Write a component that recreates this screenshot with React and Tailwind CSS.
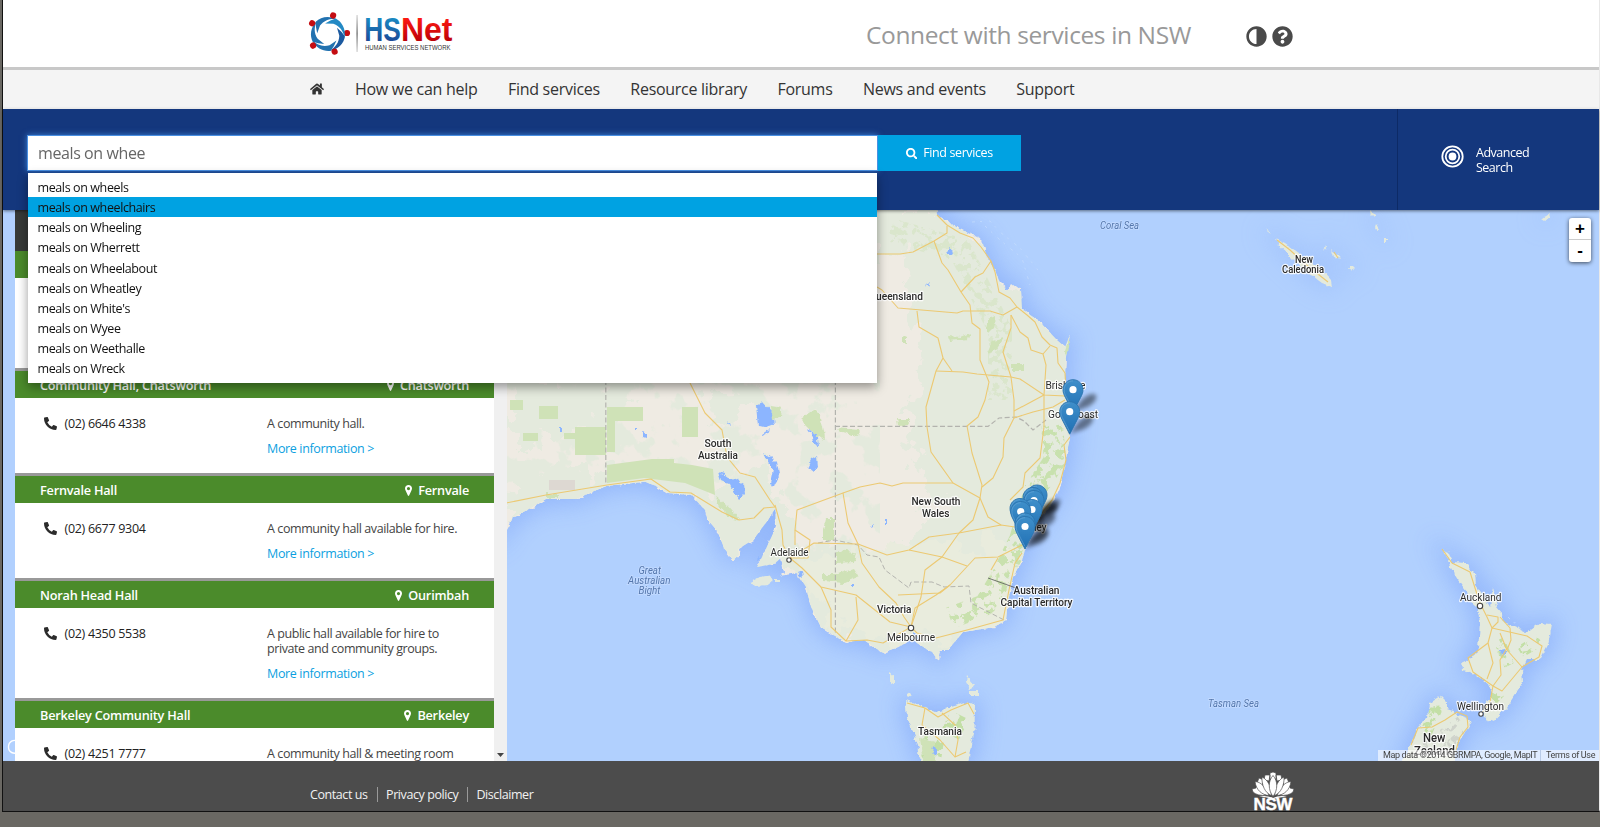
import React from "react";
import { FaHome, FaSearch, FaAdjust, FaQuestionCircle, FaPhoneAlt } from "react-icons/fa";

const NAV = ["How we can help", "Find services", "Resource library", "Forums", "News and events", "Support"];
const SUGGESTIONS = ["wheels", "wheelchairs", "Wheeling", "Wherrett", "Wheelabout", "Wheatley", "White's", "Wyee", "Weethalle", "Wreck"];
const HALLS = [
  { name: "Community Hall, Chatsworth", place: "Chatsworth", phone: "(02) 6646 4338", text: "A community hall.", height: "h-[75px]" },
  { name: "Fernvale Hall", place: "Fernvale", phone: "(02) 6677 9304", text: "A community hall available for hire.", height: "h-[75px]" },
  { name: "Norah Head Hall", place: "Ourimbah", phone: "(02) 4350 5538", text: "A public hall available for hire to private and community groups.", height: "h-[90px]" },
  { name: "Berkeley Community Hall", place: "Berkeley", phone: "(02) 4251 7777", text: "A community hall & meeting room", height: "h-[90px]" },
];

function Logo() {
  return (
    <svg className="h-[46px] w-[150px] overflow-visible" viewBox="306 10 150 46">
      <defs>
        <linearGradient id="blueFade" x1="0" y1="0" x2="0" y2="1">
          <stop offset="0.15" stopColor="#1a8cc4" />
          <stop offset="0.85" stopColor="#1b4796" />
        </linearGradient>
        <linearGradient id="redFade" x1="0" y1="0" x2="0" y2="1">
          <stop offset="0.15" stopColor="#ff1a12" />
          <stop offset="0.85" stopColor="#b80008" />
        </linearGradient>
        <linearGradient id="lineFade" x1="0" y1="0" x2="0" y2="1">
          <stop offset="0" stopColor="#ddd" />
          <stop offset="0.5" stopColor="#888" />
          <stop offset="1" stopColor="#ddd" />
        </linearGradient>
      </defs>
      {[0, 72, 144, 216, 288].map((a) => (
        <g key={a} transform={`translate(328 33.8) rotate(${a})`}>
          <path d="M17 2.6 C15.8 9.500 10.500 15.500 1.500 17 C7.500 13.500 11 9 11.3 2 L9 -6 Q14 -2 17 2.6Z" fill={a > 70 && a < 220 ? "#2272b0" : a > 220 ? "#2389c4" : "#1c5aa0"} />
          <circle cx="19" cy="-0.8" r="3.1" fill="#c40d12" />
        </g>
      ))}
      <rect x="356.3" y="15" width="1.6" height="37" fill="url(#lineFade)" />
      <g fontFamily="Liberation Sans, Arial, sans-serif">
        <text x="364.3" y="40.9" fontSize="32.5" fontWeight="700" fill="url(#blueFade)" textLength="36.5" lengthAdjust="spacingAndGlyphs">HS</text>
        <text x="401" y="40.9" fontSize="32.5" fontWeight="700" fill="url(#redFade)" textLength="51.5" lengthAdjust="spacingAndGlyphs">Net</text>
        <text x="365" y="50" fontSize="6.6" fill="#333" textLength="85.5" lengthAdjust="spacingAndGlyphs">HUMAN SERVICES NETWORK</text>
      </g>
    </svg>
  );
}

const MAINLAND =
  "M500 200 L500 540 L506 530 L513 517 L527 510 L546 499 L576 499 L592 492 L607 485.7 L645 481.7 L656 486 L668 493 L691 495 L705 510 L708 520 L714 527 L718 532 L720 537 L724 548 L733 560 L739 555 L738 549 L753 540 L768 520 L775.5 508 L776 527 L770 540 L764 553 L757 567 L774 564 L781 558 L784 572 L780 576 L797 573 L806 587 L811 607 L821 627 L837 637 L846 642 L864 640 L883 653 L895 648 L906 643 L911 637 L917 643 L925 648 L932 652 L938 660 L940 650 L948 650 L963 632 L994 627 L1006 620 L1007 607 L1009 597 L1013 577 L1022 560 L1026 547 L1036 523 L1051 505 L1061 482 L1065 463 L1070 437 L1068 400 L1065 380 L1066 357 L1070 335 L1065 347 L1057 340 L1040 322 L1022 309 L1021 290 L1012 283 L1008 290 L1000 283 L995 270 L987 258 L982 240 L960 229 L947 222 L937 215 L936 200 Z";
const TASMANIA = "M905.7 705 L906 700 L920 705 L936 712 L951 707 L969 702 L975 705 L974.5 730 L969 764 L921 764 L915 737 L907 717Z";
const ISLANDS =
  "M890 673 L894 676 L894 684 L890 685Z M967 676 L974 685 L971 690 L966 682Z M970 691 h8 v4 h-8Z M750.6 582 L760 577 L770 575.7 L772.5 580 L768 585 L754 586Z M907 694 l3 -2 1 4 -3 2Z M775 580 h5 v2 h-5Z";
const NORTH_ISLAND =
  "M1441.7 549 L1448 552 L1453 562 L1465 563 L1475 573 L1476 585 L1483 595 L1490 607 L1493 588 L1497 607 L1502 613 L1503 622 L1527 633 L1540 623 L1552 624 L1548 645 L1540 660 L1527 660 L1522 670 L1523 682 L1507 707 L1493 722 L1483 718 L1483 710 L1492 693 L1488 683 L1473 673 L1463 670 L1462 663 L1472 658 L1478 648 L1480 623 L1478 612 L1467 592 L1458 580 L1450 567 L1449 560Z";
const SOUTH_ISLAND = "M1408 752 L1418 727 L1428 717 L1430 703 L1441 696 L1447 702 L1447 710 L1467 717 L1470 725 L1458 743 L1453 764 L1400 764Z";
const CALEDONIA =
  "M1275 238 L1285 243 L1304 257 L1318 266 L1331 280 L1332 287 L1322 283 L1304 270 L1290 256 L1278 245Z M1332 250 l5 4 3 6 -6 -3Z M1349 264 l5 5 -2 3 -3 -4Z M1371 210 l5 5 -2 2 -4 -4Z M1376 224 l3 5 -2 2 -2 -4Z M1384 239 h3 v4 h-3Z M1542 219 l8 -6 1 3 -6 5Z M1323 251 l2 -6 1 2Z M1267 228 l2 4 -1 2Z";
const LAND = [MAINLAND, TASMANIA, ISLANDS, NORTH_ISLAND, SOUTH_ISLAND, CALEDONIA].join(" ");
const SHELF = [MAINLAND, TASMANIA, NORTH_ISLAND, SOUTH_ISLAND].join(" ");

const GREEN_COVER =
  "M870 205 L940 205 L1000 270 L1080 330 L1080 520 L1030 640 L930 665 L800 640 L795 575 L815 545 L850 548 L878 565 L905 560 L905 535 L940 512 L925 480 L905 440 L915 400 L925 345 L905 300 L912 245 L870 262Z M510 383 L600 383 L640 400 L600 430 L560 440 L510 440Z M690 495 L770 470 L790 530 L800 580 L735 580Z M700 385 L760 395 L720 430Z M507 465 L600 470 L700 480 L700 500 L507 530Z";

const ROADS = [
  "877,254 900,254 913,252 934,241 947,233 947,226",
  "934,241 942,263 948,270 961,292 970,305 972,323 980,329 980,360 989,382 985,400 978,417 967,426 972,453 982,485 980,498",
  "961,292 975,277 983,273 991,261",
  "937,215 947,225 960,233 973,238 981,247 991,261 995,272 999,292 1010,298 1017,307 1027,315 1035,322 1042,337 1050,345 1057,348 1058,363 1065,373 1066,393",
  "877,287 882,290 898,308 957,313 963,311 990,311 1003,315 1017,307",
  "917,311 919,327 938,338 943,358 936,371 926,407 927,427 931,452 953,483 980,498",
  "936,371 963,372 977,374 1011,377 1020,379 1044,395 1065,396",
  "943,358 952,371",
  "1011,315 1011,328 1003,352 1011,377 1014,400 1014,418 1004,438 1003,457 993,478 982,487",
  "1011,315 1020,332 1028,338 1031,350 1043,354 1046,365 1044,395 1044,427 1040,458 1025,473 1023,487 1010,500",
  "1043,354 1050,346",
  "1014,411 1044,395",
  "1014,418 1033,412 1053,407 1065,400",
  "1070,437 1064,445 1066,460 1060,483 1052,500 1040,515",
  "843,493 860,487 880,483 892,486 903,483 953,483",
  "690,383 705,413 722,430 727,457 740,473 755,477 770,500 775,507",
  "506,503 546,495 607,485 651,479 670,492 691,493 722,512 739,520 754,518 764,508 775,507",
  "775,505 782,530 783,545 790,558 802,568 821,587 856,595 890,622 911,627",
  "790,558 814,543 858,544 887,555 909,550 929,537 959,533 1001,525 1015,527",
  "795,545 795,530 797,510 843,493 848,523 858,544 862,563 879,587 896,603 904,617 911,627",
  "795,530 810,540 808,558 790,558",
  "980,498 973,520 959,533 942,557 925,570 921,597 911,627",
  "911,627 915,608 936,595 950,585 975,558 998,557 1022,545",
  "1022,553 1015,563 1009,590 1003,620 967,630 936,638 917,633 911,627",
  "980,498 988,517 1001,525",
  "821,587 831,610 831,627 846,641 867,640 883,643 911,627",
  "856,597 858,620 846,641",
  "909,550 942,557 967,566",
  "898,595 940,593 950,585",
  "991,570 998,558",
  "907,703 925,708 938,717 951,710 968,703 974,714",
  "925,708 922,725 940,740 955,757",
  "942,713 955,725 958,740 955,757 966,752",
  "1442,549 1452,563 1470,572 1475,588 1480,603 1487,617 1492,628 1527,636 1542,646 1539,657 1522,667 1502,691 1493,686 1473,672 1468,658 1488,643 1492,628",
  "1487,615 1498,617 1498,622 1492,628",
  "1500,633 1507,650 1522,667",
  "1488,643 1493,663 1487,679",
  "1507,648 1500,660 1501,675 1493,686 1490,702 1482,713",
  "1500,617 1510,628 1511,640 1507,650",
  "1467,716 1457,712 1445,720 1432,727 1418,728 1411,745",
  "1467,716 1468,727 1460,737 1456,750",
  "1277,240 1290,250 1304,263 1328,282",
  "1334,252 1338,258",
];

const BLOCK_PARKS =
  "M510 400h13v10h-13Z M539 406h19v13h-19Z M523 433h15v8h-15Z M575 427h31v28h-31Z M564 433h11v6h-11Z M607 407h36v14h-28v31h-8Z M682 407h16v30h-16Z M607 465 L652 459 L674 459 L674 463 L692 465 L713 469 L715 495 L685 483 L644 478 L607 483Z";
const PARKS =
  "M771 406 l11 2 -2 8 -8 4Z M814 409 L820 415 L824 430 L825 439 L815 435 L800 420Z M837 427 l22 2 -2 7 -15 -4Z M897 419 l14 0 -3 6 -10 1Z M826 518 h8 v22 h-11 v-10Z M836 550 l20 2 -2 10 -18 1Z M823 574 l16 0 15 -5 5 8 -14 6 -22 -2Z M715 495 l10 8 16 18 -8 -2 -14 -12Z M987 320 l8 -4 0 10 -8 8Z M1012 364 h12 v7 h-12Z M992 341 l12 -3 -8 12 -9 3Z M903 335 l4 2 0 8 -4 -2Z M948 336 l12 1 10 -4 -2 6 -18 2Z M920 738 l14 4 2 20 -12 0Z M1065 350 l4 -12 1 5 -3 14Z M546 494 h14 v4 h-14Z";
const LAKES =
  "M756 405 L763 402 L772 412 L774 425 L766 428 L758 427Z M762 435 L771 429 L769 433 L762 436Z M807 430 L812 432 L818 437 L819 448 L815 444 L813 437Z M816 456 L817 467 L813 472 L807 467 L811 459Z M763 453 L773 459 L777 463 L780 477 L774 486 L770 484 L773 470Z M718 472 l6 2 4 3 8 2 8 5 1 9 -6 6 -6 -8 -3 -6 -9 -4Z M735 490 l4 3 1 5 -4 -3Z M643 431 l3 2 0 5 -3 -1Z M946 252 l4 -4 4 3 -3 4Z M925 286 l5 -3 -2 4Z M727 421 l3 2 1 3Z M912 633 l6 2 0 5 -4 0Z M757 556 l4 3 -3 2Z M797 572 l5 -2 1 8 -3 -2Z M869 526 l4 -3 -1 6Z M1500 650 l5 -1 0 5 -4 2Z M508 400 l6 -5 M634 428h2v3h-2Z M559 428h3v3h-3Z M885 520h2v4h-2Z M852 585h3v2h-3Z M933 746l4 3-2 7-3-3Z";

const LABELS = [
  { t: "Queensland", x: 869, y: 300, w: 54, b: 1 },
  { t: "South", x: 704.5, y: 447, w: 27, b: 1 },
  { t: "Australia", x: 698, y: 459, w: 40, b: 1 },
  { t: "New", x: 1295, y: 263, w: 18, b: 1, s: 11 },
  { t: "Caledonia", x: 1282, y: 273, w: 42, b: 1, s: 11 },
  { t: "Brisbane", x: 1045.5, y: 389, w: 40 },
  { t: "Gold Coast", x: 1048, y: 417.5, w: 50 },
  { t: "New South", x: 911.4, y: 505, w: 49, b: 1 },
  { t: "Wales", x: 922, y: 517, w: 27.5, b: 1 },
  { t: "Adelaide", x: 770.5, y: 555.5, w: 38 },
  { t: "Victoria", x: 877, y: 613, w: 34.5, b: 1 },
  { t: "Melbourne", x: 887, y: 641, w: 48 },
  { t: "Sydney", x: 1015, y: 531, w: 31.5 },
  { t: "Australian", x: 1013.5, y: 594, w: 46, b: 1 },
  { t: "Capital Territory", x: 1000.5, y: 606, w: 72, b: 1 },
  { t: "Tasmania", x: 918, y: 734.5, w: 44, b: 1 },
  { t: "Auckland", x: 1460, y: 601, w: 41.5 },
  { t: "Wellington", x: 1457, y: 710, w: 47 },
  { t: "New", x: 1423, y: 741.5, w: 22.5, b: 1, s: 13 },
  { t: "Zealand", x: 1414, y: 754.5, w: 41, b: 1, s: 13 },
];
const SEA_LABELS = [
  { t: "Coral Sea", x: 1100, y: 229, w: 39 },
  { t: "Tasman Sea", x: 1208, y: 707, w: 51 },
  { t: "Great", x: 638.5, y: 574, w: 22.5 },
  { t: "Australian", x: 628, y: 584, w: 42.5 },
  { t: "Bight", x: 638.5, y: 594, w: 22 },
];
const TOWNS = [[789, 560], [911, 628, 2.7], [1480, 606, 2.7], [1481, 714]];
const PINS = [[1073, 389.7], [1069.7, 411.7], [1037, 495], [1033, 497.5], [1034, 500.5], [1032, 509.5], [1020, 508.5], [1020.7, 511.5], [1025, 523], [1025, 526.5]];

function Map() {
  return (
    <svg className="absolute inset-0 h-full w-full" viewBox="3 210 1596 551" preserveAspectRatio="none">
      <defs>
        <filter id="rough" x="0" y="200" width="1610" height="570" filterUnits="userSpaceOnUse">
          <feTurbulence type="fractalNoise" baseFrequency="0.16" numOctaves="3" seed="4" result="n" />
          <feDisplacementMap in="SourceGraphic" in2="n" scale="6" xChannelSelector="R" yChannelSelector="G" />
        </filter>
        <filter id="roughSoft" x="0" y="200" width="1610" height="570" filterUnits="userSpaceOnUse">
          <feTurbulence type="fractalNoise" baseFrequency="0.05" numOctaves="4" seed="9" result="n" />
          <feDisplacementMap in="SourceGraphic" in2="n" scale="50" xChannelSelector="R" yChannelSelector="G" />
        </filter>
        <filter id="speckle" x="0" y="200" width="1610" height="570" filterUnits="userSpaceOnUse">
          <feTurbulence type="fractalNoise" baseFrequency="0.14" numOctaves="4" seed="12" />
          <feColorMatrix values="0 0 0 0 0  0 0 0 0 0  0 0 0 0 0  14 0 0 0 -7.2" result="m" />
          <feComposite in="SourceGraphic" in2="m" operator="in" />
        </filter>
        <filter id="patches" x="0" y="200" width="1610" height="570" filterUnits="userSpaceOnUse">
          <feTurbulence type="fractalNoise" baseFrequency="0.035" numOctaves="5" seed="3" />
          <feColorMatrix values="0 0 0 0 0  0 0 0 0 0  0 0 0 0 0  16 0 0 0 -8.6" result="m" />
          <feComposite in="SourceGraphic" in2="m" operator="in" />
        </filter>
        <filter id="glow" x="0" y="160" width="1650" height="650" filterUnits="userSpaceOnUse">
          <feGaussianBlur stdDeviation="12" />
        </filter>
        <filter id="pinShade" x="-50%" y="-50%" width="200%" height="200%">
          <feGaussianBlur stdDeviation="2" />
        </filter>
        <clipPath id="land"><path d={LAND} /></clipPath>
        <linearGradient id="pinFill" x1="0" y1="0" x2="0" y2="1">
          <stop offset="0" stopColor="#3f8fca" />
          <stop offset="1" stopColor="#2070b4" />
        </linearGradient>
        <g id="pin">
          <path d="M0 -10C-5.6 -10 -10 -5.6 -10 0C-10 3 -9 5 -7.5 8L0 22.5L7.5 8C9 5 10 3 10 0C10 -5.6 5.6 -10 0 -10Z" fill="url(#pinFill)" stroke="#2b74ae" strokeWidth="0.9" />
          <path d="M0 -8.8C-5 -8.8 -8.8 -5 -8.8 0C-8.8 3 -8 5 -6.5 7.6L0 20" fill="none" stroke="#70acd9" strokeOpacity="0.6" strokeWidth="0.9" />
          <circle r="3.6" fill="#fff" />
        </g>
      </defs>
      <rect x="0" y="200" width="1610" height="570" fill="#b1d0fe" />
      <path d={SHELF} fill="#8fb3fb" stroke="#8fb3fb" strokeWidth="10" filter="url(#glow)" opacity="0.9" />
      <path d={CALEDONIA} fill="#8fb3fb" stroke="#8fb3fb" strokeWidth="6" filter="url(#glow)" opacity="0.6" />
      <g filter="url(#rough)">
        <path d={MAINLAND} fill="#efebe3" />
        <path d={[TASMANIA, ISLANDS, NORTH_ISLAND, SOUTH_ISLAND, CALEDONIA].join(" ")} fill="#e4eadd" />
      </g>
      <g clipPath="url(#land)">
        <path d={GREEN_COVER} fill="#e4eadd" filter="url(#roughSoft)" />
        <rect x="500" y="380" width="380" height="280" fill="#e4eadd" filter="url(#patches)" />
        <path d="M790 560 L1010 540 L1010 630 L940 645 L840 630Z" fill="#e9ecdd" filter="url(#roughSoft)" />
        <g fill="none" stroke="#c3dfa6" strokeLinejoin="round" filter="url(#speckle)">
          <path d="M1052 425 L1055 460 L1035 490 L1020 540 L1000 580 L985 605 L950 618" strokeWidth="22" opacity="0.85" />
          <path d="M935 735 L930 765 M960 715 L950 735" strokeWidth="20" />
          <path d="M1498 640 L1510 665 M1540 640 L1520 652 M1500 700 L1490 690 M1438 705 L1425 735" strokeWidth="12" />
          <path d="M890 230 L960 250 L1000 330 L1000 400" strokeWidth="24" opacity="0.3" />
        </g>
        <path d="M1420 750 L1460 720 M1430 760 L1464 732" stroke="#cfd3cb" strokeWidth="8" filter="url(#speckle)" />
      </g>
      <g filter="url(#rough)">
        <path d={PARKS} fill="#cfe2b7" />
        <path d={LAKES} fill="#8cb5ff" />
      </g>
      <path d={BLOCK_PARKS} fill="#cfe2b7" />
      <rect x="549" y="480" width="26" height="10" fill="#ddd8d2" />
      <g fill="none" stroke="#b3b3ae" strokeWidth="1.2" strokeDasharray="5 2.5">
        <path d="M605.8 380V484 M835.4 380V634 M835 426.4H988 L999 418 L1016 417 L1024 421 L1033 430 L1046 420" />
        <path d="M818 543 L835 540 L858 545 L867 555 L879 557 L885 570 L909 588 L911 582 L932 582 L944 587 L969 586 L971 603 L1006 621" strokeWidth="1" />
      </g>
      <g fill="none" stroke="#ecc972" strokeWidth="1.1" strokeLinejoin="round">
        {ROADS.map((r) => (
          <polyline key={r} points={r} />
        ))}
      </g>
      <g fill="none" stroke="#c3dafc" strokeWidth="0.8" strokeDasharray="3 5 2 7">
        <path d="M972 222 L990 221 L1000 232 L1020 248 L1038 270 M985 226 L1000 240 L1022 258 L1030 285 M1508 617 l6 6 3 -1" />
      </g>
      <path d="M988 578 L1016 588" stroke="#555" strokeWidth="0.8" />
      {TOWNS.map(([x, y, r]) => (
        <circle key={x} cx={x} cy={y} r={r || 2.2} fill="#fff" stroke="#444" strokeWidth="1.1" />
      ))}
      <g fontFamily="Roboto, sans-serif" fontSize="11.7" stroke="#fff" strokeOpacity="0.85" strokeWidth="2.4" strokeLinejoin="round" paintOrder="stroke" fill="#2a2a2a">
        {LABELS.map((l) => (
          <text key={l.t + l.y} x={l.x} y={l.y} textLength={l.w} lengthAdjust="spacingAndGlyphs" fontWeight={l.b ? 500 : 400} fontSize={l.s || 11.7}>{l.t}</text>
        ))}
      </g>
      <g fontFamily="Roboto, sans-serif" fontSize="10.5" fontStyle="italic" fill="#5477ad" stroke="#c6dcff" strokeWidth="1.5" paintOrder="stroke">
        {SEA_LABELS.map((l) => (
          <text key={l.t} x={l.x} y={l.y} textLength={l.w} lengthAdjust="spacingAndGlyphs">{l.t}</text>
        ))}
      </g>
      <path d="M20 742 C13 738 8.500 742 8.500 747 C8.500 752 13 755 20 752" fill="none" stroke="#fff" strokeWidth="1.4" />
      {PINS.map(([x, y]) => (
        <path key={`s${x},${y}`} transform={`translate(${x} ${y})`} d="M0 22 L9 10 Q17 2 23 5 Q25 11 15 17Z" fill="#000" opacity="0.45" filter="url(#pinShade)" />
      ))}
      {PINS.map(([x, y]) => (
        <use key={`p${x},${y}`} href="#pin" x={x} y={y} />
      ))}
    </svg>
  );
}

function PlaceMarker() {
  return (
    <svg className="mr-[6px] h-[11px] w-[7px]" viewBox="0 0 7 11">
      <path fillRule="evenodd" fill="#fff" d="M3.500 0C1.500 0 0 1.500 0 3.500C0 4.500 0.400 5.300 0.800 6L2.900 10.500Q3.500 11.300 4.100 10.500L6.200 6C6.600 5.300 7 4.500 7 3.500C7 1.500 5.500 0 3.500 0ZM3.500 2A1.600 1.600 0 1 1 3.500 5.200A1.600 1.600 0 1 1 3.500 2Z" />
    </svg>
  );
}

function Hall({ name, place, phone, text, height }) {
  return (
    <div className="shrink-0 border-t-[3px] border-[#999] bg-white">
      <div className="flex h-[27px] items-center justify-between bg-[#4b8b2b] pt-[2px] pr-[25px] pl-[25px] text-[12.7px] font-semibold tracking-[-0.22px] text-white">
        <span>{name}</span>
        <span className="flex items-center">
          <PlaceMarker />
          {place}
        </span>
      </div>
      <div className={`flex text-[12.5px] leading-[15px] ${height}`}>
        <div className="flex w-[252px] pt-[18px] pl-[29px] tracking-[-0.3px] text-[#222]">
          <FaPhoneAlt className="mt-[0.5px] mr-[7.5px] size-[13px] text-[#2b2b2b]" />
          {phone}
        </div>
        <div className="w-[210px] pt-[18px] tracking-[-0.42px] text-[#444]">
          <p>{text}</p>
          <p className="pt-[10px] tracking-[-0.36px] text-[#0c9fdf]">More information &gt;</p>
        </div>
      </div>
    </div>
  );
}

function Lotus() {
  return (
    <svg className="h-[39px] w-[42px] overflow-visible" viewBox="0 0 42 39">
      <g fill="#fff" stroke="#4c4c4c" strokeWidth="0.7">
        <path d="M7 6 L12 8 L10 13 L5 11Z M35 6 L30 8 L32 13 L37 11Z M13 3 L18 3 L17 9 L12 8Z M29 3 L24 3 L25 9 L30 8Z M18 1 L21 0 L24 1 L24 7 L18 7Z" />
        <path d="M0 17 L4 16 L4 14 L10 18 L14 23.500 C9 23.500 4 23 1 20Z M42 17 L38 16 L38 14 L32 18 L28 23.500 C33 23.500 38 23 41 20Z" />
        <path d="M3 9.500 C9 10 14 15 17 23.500 C10 23 4 18 3 9.500Z M39 9.500 C33 10 28 15 25 23.500 C32 23 38 18 39 9.500Z" />
        <path d="M10 5 C16 8 19 14 19.500 23.500 C13 21 9.500 13 10 5Z M32 5 C26 8 23 14 22.500 23.500 C29 21 32.500 13 32 5Z" />
        <path d="M21 3.500 C26 9 26 18 21 24.500 C16 18 16 9 21 3.500Z" />
        <path d="M7 24.500 Q15 23 21 26 Q27 23 35 24.500 Q28 25 21 27 Q14 25 7 24.500Z" strokeWidth="0" />
      </g>
      <text x="1.500" y="38" fontFamily="Liberation Sans, Arial, sans-serif" fontWeight="700" fontSize="16" fill="#fff" textLength="38.500" lengthAdjust="spacingAndGlyphs" stroke="#fff" strokeWidth="0.4">NSW</text>
    </svg>
  );
}

export default function App() {
  return (
    <div className="h-[827px] w-[1600px] overflow-hidden bg-[#6a6863] pl-[2px] font-['Open_Sans',sans-serif]">
      <div className="flex h-[812px] w-full flex-col border-r border-b-2 border-l border-r-[#e8e8e8] border-b-[#111] border-l-[#111] bg-white">
        <header className="flex h-[70px] shrink-0 border-b-[3px] border-[#c8c8c8] pl-[303px]">
          <div className="mt-[10px] w-[560px]"><Logo /></div>
          <div className="mt-[16px] w-[380px] text-[24.5px] leading-[38px] tracking-[-0.38px] whitespace-nowrap text-[#999]">Connect with services in NSW</div>
          <div className="mt-[26px] flex gap-[5px] text-[21px] text-[#4a4a4a]">
            <FaAdjust className="-scale-x-100" />
            <FaQuestionCircle />
          </div>
        </header>
        <nav className="flex h-[39px] shrink-0 items-center border-b border-white bg-[#f4f4f4] pl-[307px] text-[16px] tracking-[-0.28px] text-[#333]">
          <FaHome className="mr-[31px] size-[14px]" />
          <div className="flex gap-[30.5px]">
            {NAV.map((n) => (
              <span key={n}>{n}</span>
            ))}
          </div>
        </nav>
        <section className="relative z-10 flex h-[101px] shrink-0 bg-[#14377d] shadow-[0_1px_3px_rgba(0,0,0,0.5)]">
          <div className="relative mt-[26px] ml-[24px] flex h-[36px] w-[994px]">
            <div className="flex h-[35.5px] w-[850.5px] items-center border border-[#4a90e2] bg-white pl-[10px] text-[16px] tracking-[-0.4px] text-[#666] shadow-[0_0_6px_#3a7fd5]">meals on whee</div>
            <div className="flex h-[35.5px] w-[143.5px] items-center justify-center bg-[#00a2e2] pt-px text-[12.5px] tracking-[-0.4px] text-white">
              <FaSearch className="mr-[6px] size-[11.5px]" />
              Find services
            </div>
            <ul className="absolute top-[38px] left-[1px] h-[210px] w-[849px] bg-white pt-[4px] text-[12.5px] tracking-[-0.39px] text-[#111] shadow-[0_4px_10px_rgba(0,0,0,0.4)]">
              {SUGGESTIONS.map((s) => (
                <li key={s} className={`h-[20.15px] pl-[9.5px] leading-[22px] ${s === "wheelchairs" ? "bg-[#00a2e2]" : ""}`}>meals on {s}</li>
              ))}
            </ul>
          </div>
          <div className="ml-auto flex w-[202px] border-l border-[#0d2a66] pt-[36px] pl-[43px] text-[12.5px] leading-[15px] tracking-[-0.5px] text-white">
            <svg className="mr-[12px] size-[23px]" viewBox="0 0 23 23" fill="none" stroke="#fff" strokeWidth="1.8">
              <circle cx="11.500" cy="11.500" r="10.200" />
              <circle cx="11.500" cy="11.500" r="6.800" />
              <circle cx="11.500" cy="11.500" r="3.900" fill="#fff" stroke="none" />
            </svg>
            <div className="w-[70px]">Advanced Search</div>
          </div>
        </section>
        <section className="relative flex h-[551px] shrink-0 overflow-hidden">
          <Map />
          <div className="relative ml-[12px] flex w-[479px] flex-col overflow-hidden bg-white">
            <div className="h-[41px] shrink-0 bg-[#373a38]" />
            <div className="h-[27px] shrink-0 bg-[#4b8b2b]" />
            <div className="h-[90px] shrink-0" />
            {HALLS.map((h) => (
              <Hall key={h.name} {...h} />
            ))}
          </div>
          <div className="relative flex w-[12.5px] items-end justify-center bg-[#f0f0f0] pb-[4px]">
            <svg className="h-[4px] w-[7px]" viewBox="0 0 7 4"><path d="M0 0H7L3.500 4Z" fill="#444" /></svg>
          </div>
          <div className="absolute top-[8px] right-[8px] flex w-[22px] flex-col rounded-[3px] bg-white text-center font-['Liberation_Sans',sans-serif] text-[17px] font-bold text-black shadow-[0_1px_4px_rgba(0,0,0,0.65)]">
            <span className="h-[22px] border-b border-[#ccc] leading-[22px]">+</span>
            <span className="h-[22px] leading-[22px]">-</span>
          </div>
          <div className="absolute right-0 bottom-0 flex h-[11px] w-[221px] items-center bg-white/60 font-['Roboto',sans-serif] text-[9px] leading-[11px] whitespace-nowrap text-[#444]">
            <span className="w-[163px] shrink-0 border-r border-[#b8cbe8] pl-[5px] tracking-[-0.37px]">Map data ©2014 GBRMPA, Google, MapIT</span>
            <span className="pl-[5px] tracking-[-0.35px]">Terms of Use</span>
          </div>
        </section>
        <footer className="flex grow items-start bg-[#4c4c4c] pl-[307px] text-[12.5px] leading-[15px] tracking-[-0.42px] text-[#f2f2f2]">
          <div className="mt-[26px] flex">
            <span className="border-r border-[#999] pr-[9px]">Contact us</span>
            <span className="border-r border-[#999] px-[8.5px]">Privacy policy</span>
            <span className="pl-[8.5px]">Disclaimer</span>
          </div>
          <div className="mt-[11px] mr-[305px] ml-auto"><Lotus /></div>
        </footer>
      </div>
    </div>
  );
}
